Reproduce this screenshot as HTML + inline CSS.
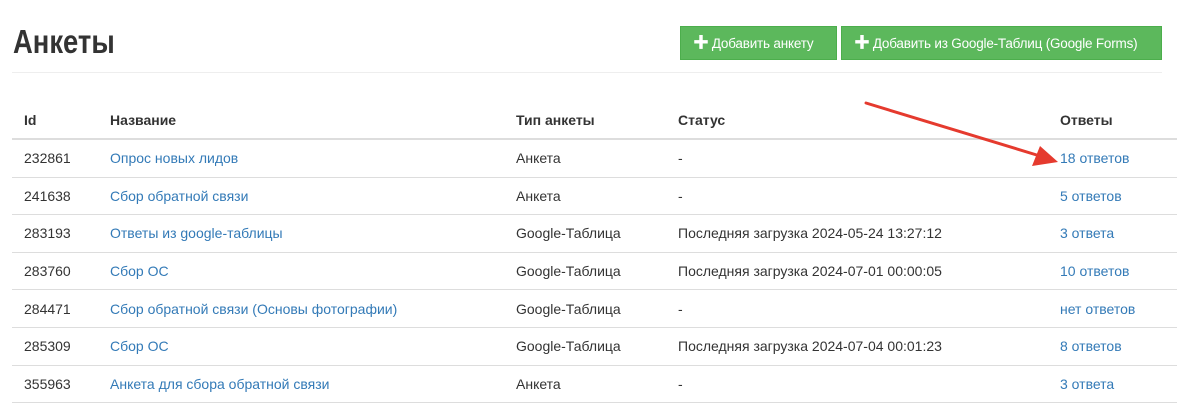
<!DOCTYPE html>
<html><head><meta charset="utf-8"><style>
body{margin:0;background:#fff;font-family:"Liberation Sans","Noto Sans CJK SC",sans-serif;font-size:14px;color:#333;width:1199px;height:405px;overflow:hidden;position:relative}
h1{position:absolute;left:13px;top:23px;margin:0;font-size:33px;font-weight:bold;color:#333;transform:scaleX(0.83);transform-origin:0 0}
.hr{position:absolute;left:12px;top:72px;width:1150px;height:1px;background:#eee}
.btn{position:absolute;top:26px;height:34px;background:#5cb85c;border:1px solid #4cae4c;color:#fff;font-size:13.5px;line-height:34px;box-sizing:border-box;padding-left:12px;white-space:nowrap;letter-spacing:-0.2px}
.btn b{font-size:16px;margin-right:3px}
table{position:absolute;left:12px;top:101px;width:1165px;border-collapse:collapse}
th{text-align:left;font-weight:bold;height:37px;border-bottom:2px solid #ddd;padding:0 12px;vertical-align:middle}
td{height:36.6px;border-bottom:1px solid #ddd;padding:0 12px;vertical-align:middle}
a{color:#337ab7;text-decoration:none}
</style></head><body>
<h1>Анкеты</h1>
<div class="btn" style="left:680px;width:157px"><b>✚</b>Добавить анкету</div>
<div class="btn" style="left:841px;width:321px"><b>✚</b>Добавить из Google-Таблиц (Google Forms)</div>
<div class="hr"></div>
<table>
<tr><th style="width:62px">Id</th><th style="width:382px">Название</th><th style="width:138px">Тип анкеты</th><th style="width:358px">Статус</th><th>Ответы</th></tr>
<tr><td>232861</td><td><a>Опрос новых лидов</a></td><td>Анкета</td><td>-</td><td><a>18 ответов</a></td></tr>
<tr><td>241638</td><td><a>Сбор обратной связи</a></td><td>Анкета</td><td>-</td><td><a>5 ответов</a></td></tr>
<tr><td>283193</td><td><a>Ответы из google-таблицы</a></td><td>Google-Таблица</td><td>Последняя загрузка 2024-05-24 13:27:12</td><td><a>3 ответа</a></td></tr>
<tr><td>283760</td><td><a>Сбор ОС</a></td><td>Google-Таблица</td><td>Последняя загрузка 2024-07-01 00:00:05</td><td><a>10 ответов</a></td></tr>
<tr><td>284471</td><td><a>Сбор обратной связи (Основы фотографии)</a></td><td>Google-Таблица</td><td>-</td><td><a>нет ответов</a></td></tr>
<tr><td>285309</td><td><a>Сбор ОС</a></td><td>Google-Таблица</td><td>Последняя загрузка 2024-07-04 00:01:23</td><td><a>8 ответов</a></td></tr>
<tr><td>355963</td><td><a>Анкета для сбора обратной связи</a></td><td>Анкета</td><td>-</td><td><a>3 ответа</a></td></tr>
</table>
<svg style="position:absolute;left:0;top:0" width="1199" height="405">
<line x1="866" y1="103" x2="1040" y2="156" stroke="#e53a2e" stroke-width="3" stroke-linecap="round"/>
<polygon points="1058,162 1032,166 1040,146" fill="#e53a2e"/>
</svg>
</body></html>
